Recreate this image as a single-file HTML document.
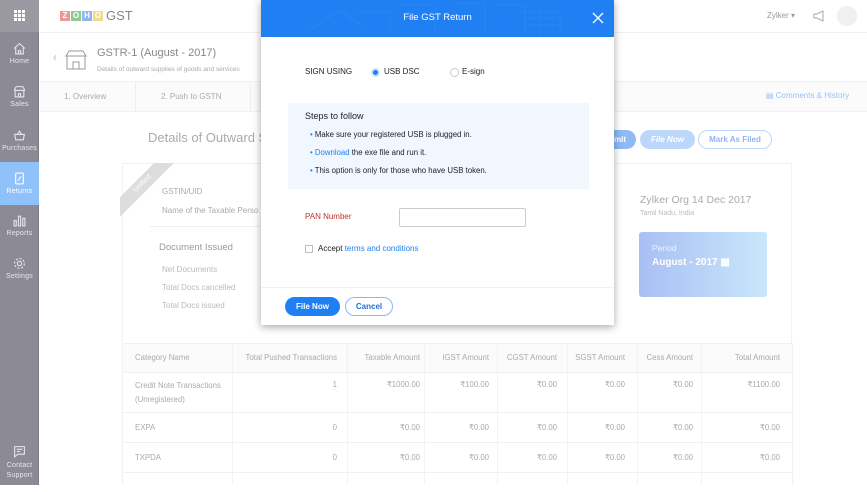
<!DOCTYPE html>
<html><head><meta charset="utf-8"><style>
*{box-sizing:border-box;margin:0;padding:0}
body{width:867px;height:485px;overflow:hidden;position:relative;font-family:"Liberation Sans",sans-serif;background:#fff;color:#999}
.abs{position:absolute}
.sb{left:0;top:0;width:39px;height:485px;background:#8c8b95;border-right:1px solid #7d7c86}
.sbtop{left:0;top:0;width:39px;height:32px;background:#9a99a2}
.ni{position:absolute;left:0;width:39px;text-align:center;color:#e6e6ea;font-size:7px;letter-spacing:.2px}
.ni svg{display:block;margin:0 auto 3px}
.t{position:absolute;white-space:nowrap}
.tbl{left:122px;top:343px;width:670px}
.row{position:absolute;left:0;width:670px;border-top:1px solid #f1f1f1}
.c{position:absolute;font-size:7.8px;color:#aaa;text-align:right}
.lg{position:absolute;top:11px;width:10px;height:10px;color:#fff;font-size:8px;font-weight:bold;text-align:center;line-height:10px}
</style></head><body>
<div class="abs sb"></div>
<div class="abs sbtop"></div>
<svg class="abs" style="left:14px;top:10px" width="11" height="11"><g fill="#fff"><rect x="0" y="0" width="3" height="3"/><rect x="4" y="0" width="3" height="3"/><rect x="8" y="0" width="3" height="3"/><rect x="0" y="4" width="3" height="3"/><rect x="4" y="4" width="3" height="3"/><rect x="8" y="4" width="3" height="3"/><rect x="0" y="8" width="3" height="3"/><rect x="4" y="8" width="3" height="3"/><rect x="8" y="8" width="3" height="3"/></g></svg>
<div class="ni" style="top:42px"><svg width="13" height="13" viewBox="0 0 12 12" fill="none" stroke="#e6e6ea"><path d="M1 6L6 1.5 11 6M2.5 5v6h7V5M5 11V8h2v3"/></svg>Home</div>
<div class="ni" style="top:85px"><svg width="13" height="13" viewBox="0 0 12 12" fill="none" stroke="#e6e6ea"><path d="M1.5 4L3 1.5h6L10.5 4v1h-9zM2 5v6h8V5M5 11V8h2v3"/></svg>Sales</div>
<div class="ni" style="top:129px"><svg width="13" height="13" viewBox="0 0 12 12" fill="none" stroke="#e6e6ea"><path d="M1.5 5h9l-1 5h-7zM4 5l2-3 2 3"/></svg>Purchases</div>
<div class="abs" style="left:0;top:162px;width:39px;height:43px;background:#8fc1fb"></div>
<div class="ni" style="top:172px;color:#fff"><svg width="13" height="13" viewBox="0 0 12 12" fill="none" stroke="#fff"><rect x="2.5" y="1" width="7" height="10" rx="1"/><path d="M4.5 8l3-4"/></svg>Returns</div>
<div class="ni" style="top:214px"><svg width="13" height="13" viewBox="0 0 12 12" fill="none" stroke="#e6e6ea"><rect x="1" y="6" width="2" height="5"/><rect x="5" y="2" width="2" height="9"/><rect x="9" y="4" width="2" height="7"/></svg>Reports</div>
<div class="ni" style="top:257px"><svg width="13" height="13" viewBox="0 0 12 12" fill="none" stroke="#e6e6ea"><circle cx="6" cy="6" r="2"/><circle cx="6" cy="6" r="4.5" stroke-dasharray="2 1.5"/></svg>Settings</div>
<div class="ni" style="top:445px;line-height:10px"><svg width="13" height="13" viewBox="0 0 12 12" fill="none" stroke="#e6e6ea"><path d="M1.5 1.5h9v7h-6l-3 2.5z M3.5 4h5M3.5 6h3"/></svg>Contact<br>Support</div>

<!-- header -->
<div class="abs" style="left:40px;top:32px;width:827px;height:1px;background:#f0f0f0"></div>
<div class="lg" style="left:60px;background:#e89a9a">Z</div>
<div class="lg" style="left:71px;background:#8fc98f">O</div>
<div class="lg" style="left:82px;background:#8fb5f0">H</div>
<div class="lg" style="left:93px;background:#f0dc8a">O</div>
<div class="t" style="left:106px;top:8px;font-size:13px;color:#888">GST</div>
<div class="t" style="left:767px;top:11px;font-size:8px;color:#999">Zylker ▾</div>
<svg class="abs" style="left:812px;top:9px" width="14" height="14" fill="none" stroke="#aaa"><path d="M2 5h3l6-3v10L5 9H2z"/></svg>
<div class="abs" style="left:837px;top:6px;width:20px;height:20px;border-radius:50%;background:#eef0f3"></div>

<!-- title -->
<div class="t" style="left:53px;top:50px;font-size:12px;color:#bbb">‹</div>
<svg class="abs" style="left:64px;top:48px" width="24" height="24" fill="none" stroke="#999"><path d="M2 8l3-5h14l3 5zM3 8v13h18V8M9 21v-7h6v7"/></svg>
<div class="t" style="left:97px;top:47px;font-size:11px;color:#888">GSTR-1 (August - 2017)</div>
<div class="t" style="left:97px;top:66px;font-size:6.5px;color:#aaa">Details of outward supplies of goods and services</div>
<div class="abs" style="left:40px;top:81px;width:827px;height:31px;background:#fbfbfb;border-top:1px solid #f0f0f0;border-bottom:1px solid #f0f0f0"></div>
<div class="abs" style="left:135px;top:81px;width:1px;height:31px;background:#eee"></div>
<div class="abs" style="left:250px;top:81px;width:1px;height:31px;background:#eee"></div>
<div class="t" style="left:64px;top:92px;font-size:8px;color:#aaa">1. Overview</div>
<div class="t" style="left:161px;top:92px;font-size:8px;color:#aaa">2. Push to GSTN</div>
<div class="t" style="left:766px;top:91px;font-size:8px;color:#9bc0f5">▤ Comments &amp; History</div>

<div class="t" style="left:148px;top:130px;font-size:13px;color:#aaa">Details of Outward S</div>
<div class="abs" style="left:590px;top:130px;width:46px;height:19px;border-radius:10px;background:#8fbaf5"></div>
<div class="t" style="left:614px;top:135px;font-size:8px;color:#fff;font-weight:bold">mit</div>
<div class="abs" style="left:640px;top:130px;width:55px;height:19px;border-radius:10px;background:#bcd7fa;color:#fff;font-size:8px;font-style:italic;font-weight:bold;text-align:center;line-height:19px">File Now</div>
<div class="abs" style="left:698px;top:130px;width:74px;height:19px;border-radius:10px;border:1px solid #bcd7fa;color:#8fb5ee;font-size:8px;font-weight:bold;text-align:center;line-height:17px">Mark As Filed</div>

<div class="abs" style="left:122px;top:163px;width:670px;height:180px;border:1px solid #f2f2f2;border-bottom:none"></div>
<div class="abs" style="left:120px;top:163px;width:55px;height:55px;overflow:hidden"><div style="position:absolute;left:-22px;top:14px;width:90px;height:14px;background:#ddd;transform:rotate(-45deg);color:#fff;font-size:7px;text-align:center;line-height:14px">Unfiled</div></div>
<div class="t" style="left:162px;top:187px;font-size:8px;color:#aaa">GSTIN/UID</div>
<div class="t" style="left:162px;top:206px;font-size:8px;color:#aaa">Name of the Taxable Perso</div>
<div class="abs" style="left:150px;top:226px;width:112px;height:1px;background:#f0f0f0"></div>
<div class="t" style="left:159px;top:242px;font-size:9.5px;color:#999">Document Issued</div>
<div class="t" style="left:162px;top:265px;font-size:8px;color:#bbb">Net Documents</div>
<div class="t" style="left:162px;top:283px;font-size:8px;color:#bbb">Total Docs cancelled</div>
<div class="t" style="left:162px;top:301px;font-size:8px;color:#bbb">Total Docs issued</div>
<div class="t" style="left:640px;top:194px;font-size:10.5px;color:#aaa">Zylker Org 14 Dec 2017</div>
<div class="t" style="left:640px;top:210px;font-size:7px;color:#bbb">Tamil Nadu, India</div>
<div class="abs" style="left:639px;top:232px;width:128px;height:65px;border-radius:3px;background:linear-gradient(90deg,#a9bff4,#c8e7fb)"></div>
<div class="t" style="left:652px;top:243px;font-size:8.5px;color:#eef4ff">Period</div>
<div class="t" style="left:652px;top:257px;font-size:10px;font-weight:bold;color:#fff">August - 2017 ▦</div>

<!-- table -->
<div class="abs tbl">
<div class="row" style="top:0;height:30px;background:#fbfbfb"></div>
<div class="row" style="top:29px;height:40px"></div>
<div class="row" style="top:69px;height:30px"></div>
<div class="row" style="top:99px;height:30px"></div>
<div class="row" style="top:129px;height:20px"></div>
</div>
<div class="abs" style="left:122px;top:343px;width:1px;height:142px;background:#f1f1f1"></div>
<div class="abs" style="left:792px;top:343px;width:1px;height:142px;background:#f1f1f1"></div>
<div class="abs" style="left:232px;top:343px;width:1px;height:142px;background:#f3f3f3"></div>
<div class="abs" style="left:347px;top:343px;width:1px;height:142px;background:#f3f3f3"></div>
<div class="abs" style="left:424px;top:343px;width:1px;height:142px;background:#f3f3f3"></div>
<div class="abs" style="left:497px;top:343px;width:1px;height:142px;background:#f3f3f3"></div>
<div class="abs" style="left:567px;top:343px;width:1px;height:142px;background:#f3f3f3"></div>
<div class="abs" style="left:637px;top:343px;width:1px;height:142px;background:#f3f3f3"></div>
<div class="abs" style="left:701px;top:343px;width:1px;height:142px;background:#f3f3f3"></div>
<div class="c" style="left:135px;top:353px;text-align:left">Category Name</div>
<div class="c" style="left:232px;width:105px;top:353px">Total Pushed Transactions</div>
<div class="c" style="left:347px;width:73px;top:353px">Taxable Amount</div>
<div class="c" style="left:424px;width:65px;top:353px">IGST Amount</div>
<div class="c" style="left:497px;width:60px;top:353px">CGST Amount</div>
<div class="c" style="left:567px;width:58px;top:353px">SGST Amount</div>
<div class="c" style="left:637px;width:56px;top:353px">Cess Amount</div>
<div class="c" style="left:701px;width:79px;top:353px">Total Amount</div>
<div class="c" style="left:135px;top:379px;text-align:left;line-height:14px">Credit Note Transactions<br>(Unregistered)</div>
<div class="c" style="left:232px;width:105px;top:380px">1</div>
<div class="c" style="left:347px;width:73px;top:380px">₹1000.00</div>
<div class="c" style="left:424px;width:65px;top:380px">₹100.00</div>
<div class="c" style="left:497px;width:60px;top:380px">₹0.00</div>
<div class="c" style="left:567px;width:58px;top:380px">₹0.00</div>
<div class="c" style="left:637px;width:56px;top:380px">₹0.00</div>
<div class="c" style="left:701px;width:79px;top:380px">₹1100.00</div>
<div class="c" style="left:135px;top:423px;text-align:left">EXPA</div>
<div class="c" style="left:232px;width:105px;top:423px">0</div>
<div class="c" style="left:347px;width:73px;top:423px">₹0.00</div>
<div class="c" style="left:424px;width:65px;top:423px">₹0.00</div>
<div class="c" style="left:497px;width:60px;top:423px">₹0.00</div>
<div class="c" style="left:567px;width:58px;top:423px">₹0.00</div>
<div class="c" style="left:637px;width:56px;top:423px">₹0.00</div>
<div class="c" style="left:701px;width:79px;top:423px">₹0.00</div>
<div class="c" style="left:135px;top:453px;text-align:left">TXPDA</div>
<div class="c" style="left:232px;width:105px;top:453px">0</div>
<div class="c" style="left:347px;width:73px;top:453px">₹0.00</div>
<div class="c" style="left:424px;width:65px;top:453px">₹0.00</div>
<div class="c" style="left:497px;width:60px;top:453px">₹0.00</div>
<div class="c" style="left:567px;width:58px;top:453px">₹0.00</div>
<div class="c" style="left:637px;width:56px;top:453px">₹0.00</div>
<div class="c" style="left:701px;width:79px;top:453px">₹0.00</div>

<!-- modal -->
<div class="abs" style="left:261px;top:0;width:353px;height:325px;background:#fff;box-shadow:0 2px 8px rgba(0,0,0,.35)"></div>
<div class="abs" style="left:261px;top:0;width:353px;height:37px;background:#1f7ff3"></div>
<svg class="abs" style="left:310px;top:0" width="270" height="37" fill="none" stroke="#2f88f4" stroke-width="0.8"><path d="M0 30l30-20 25 18M45 12h35v25M90 5h35v32M145 3h30v34M185 5h30v32M210 12h40v25M215 18h35M215 25h35M230 12v25"/></svg>
<div class="t" style="left:261px;width:353px;text-align:center;top:12px;font-size:9.5px;color:#fff">File GST Return</div>
<svg class="abs" style="left:592px;top:12px" width="12" height="12" stroke="#fff" stroke-width="1.3"><path d="M1 1l10 10M11 1L1 11"/></svg>
<div class="t" style="left:305px;top:67px;font-size:8px;color:#222">SIGN USING</div>
<div class="abs" style="left:371px;top:68px;width:9px;height:9px;border-radius:50%;background:#1f7ff3;border:2px solid #cfe2fc"></div>
<div class="t" style="left:384px;top:67px;font-size:8px;color:#222">USB DSC</div>
<div class="abs" style="left:450px;top:68px;width:9px;height:9px;border-radius:50%;border:1px solid #ccc"></div>
<div class="t" style="left:462px;top:67px;font-size:8px;color:#222">E-sign</div>
<div class="abs" style="left:288px;top:103px;width:301px;height:86px;background:#f1f7fe"></div>
<div class="t" style="left:305px;top:111px;font-size:9px;color:#222">Steps to follow</div>
<div class="t" style="left:310px;top:126px;font-size:7.8px;color:#222;line-height:18px"><span style="color:#1f7ff3">•</span> Make sure your registered USB is plugged in.<br><span style="color:#1f7ff3">•</span> <span style="color:#1f7ff3">Download</span> the exe file and run it.<br><span style="color:#1f7ff3">•</span> This option is only for those who have USB token.</div>
<div class="t" style="left:305px;top:212px;font-size:8px;color:#c0322c">PAN Number</div>
<div class="abs" style="left:399px;top:208px;width:127px;height:19px;border:1px solid #ccc;border-radius:2px"></div>
<div class="abs" style="left:305px;top:245px;width:8px;height:8px;border:1px solid #bbb;border-radius:1px"></div>
<div class="t" style="left:318px;top:244px;font-size:8px;color:#222">Accept <span style="color:#1f7ff3">terms and conditions</span></div>
<div class="abs" style="left:261px;top:287px;width:353px;height:1px;background:#f0f0f0"></div>
<div class="abs" style="left:285px;top:297px;width:55px;height:19px;border-radius:10px;background:#1f7ff3;color:#fff;font-size:8px;font-weight:bold;text-align:center;line-height:19px">File Now</div>
<div class="abs" style="left:345px;top:297px;width:48px;height:19px;border-radius:10px;border:1px solid #8ab8f6;color:#1f6fdd;font-size:8px;font-weight:bold;text-align:center;line-height:17px">Cancel</div>
</body></html>
